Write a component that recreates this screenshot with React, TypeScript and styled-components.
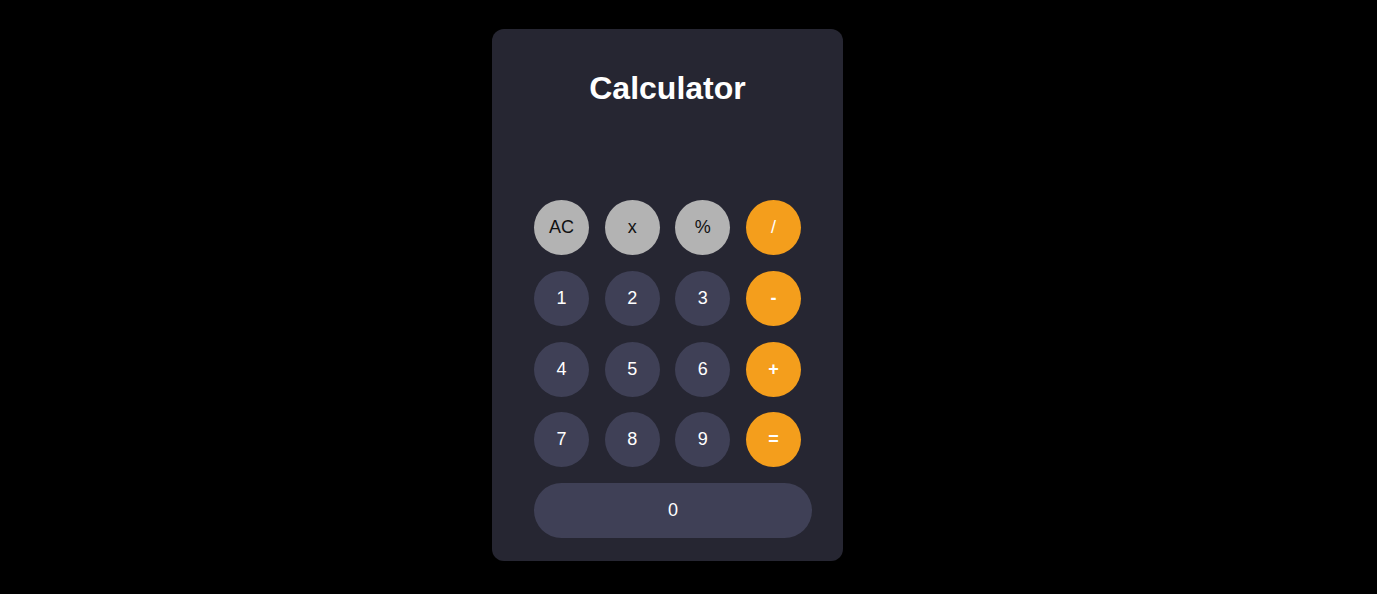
import React, { useState } from "react";
import styled, { createGlobalStyle } from "styled-components";

const Global = createGlobalStyle`
  html, body { margin: 0; padding: 0; background: #000; }
  body { font-family: "Liberation Sans", Arial, sans-serif; }
  * { box-sizing: border-box; }
`;

const Page = styled.div`
  min-height: 594px;
  display: flex;
  justify-content: center;
  align-items: flex-start;
  padding-top: 29px;
  padding-right: 42px;
`;

const Card = styled.div`
  width: 351px;
  height: 532px;
  background: #262632;
  border-radius: 12px;
  padding: 41px 31px 23px 42px;
  display: flex;
  flex-direction: column;
`;

const Title = styled.h1`
  margin: 0 -31px 0 -42px;
  text-align: center;
  color: #ffffff;
  font-size: 32px;
  font-weight: 700;
  line-height: 37px;
`;

const Display = styled.div`
  height: 93px;
  color: #fff;
  font-size: 40px;
  text-align: right;
  padding-right: 11px;
  display: flex;
  align-items: center;
  justify-content: flex-end;
`;

const Keys = styled.div`
  display: grid;
  grid-template-columns: repeat(4, 55px);
  grid-auto-rows: 55px;
  column-gap: 15.67px;
  row-gap: 15.75px;
`;

type Kind = "func" | "num" | "op";

const Key = styled.button<{ $kind: Kind; $wide?: boolean; $bold?: boolean }>`
  border: none;
  outline: none;
  padding: 0;
  border-radius: 28px;
  width: ${(p) => (p.$wide ? "278px" : "55px")};
  height: 55px;
  grid-column: ${(p) => (p.$wide ? "1 / span 4" : "auto")};
  font-family: "Liberation Sans", Arial, sans-serif;
  font-size: 18px;
  font-weight: ${(p) => (p.$bold ? 700 : 400)};
  cursor: pointer;
  background: ${(p) =>
    p.$kind === "func" ? "#b3b3b3" : p.$kind === "op" ? "#f49e1c" : "#3f4056"};
  color: ${(p) => (p.$kind === "func" ? "#111111" : "#ffffff")};
`;

const keys: { label: string; kind: Kind; wide?: boolean; bold?: boolean }[] = [
  { label: "AC", kind: "func" },
  { label: "x", kind: "func" },
  { label: "%", kind: "func" },
  { label: "/", kind: "op" },
  { label: "1", kind: "num" },
  { label: "2", kind: "num" },
  { label: "3", kind: "num" },
  { label: "-", kind: "op", bold: true },
  { label: "4", kind: "num" },
  { label: "5", kind: "num" },
  { label: "6", kind: "num" },
  { label: "+", kind: "op", bold: true },
  { label: "7", kind: "num" },
  { label: "8", kind: "num" },
  { label: "9", kind: "num" },
  { label: "=", kind: "op", bold: true },
  { label: "0", kind: "num", wide: true },
];

export default function App() {
  const [value, setValue] = useState("");

  const press = (k: string) => {
    if (k === "AC") return setValue("");
    if (k === "x") return setValue((v) => v.slice(0, -1));
    if (k === "=") {
      try {
        // eslint-disable-next-line no-new-func
        const r = Function(`return (${value.replace(/%/g, "/100")})`)();
        setValue(String(r));
      } catch {
        setValue("Error");
      }
      return;
    }
    setValue((v) => v + k);
  };

  return (
    <>
      <Global />
      <Page>
        <Card>
          <Title>Calculator</Title>
          <Display>{value}</Display>
          <Keys>
            {keys.map((k) => (
              <Key
                key={k.label}
                $kind={k.kind}
                $wide={k.wide}
                $bold={k.bold}
                onClick={() => press(k.label)}
              >
                {k.label}
              </Key>
            ))}
          </Keys>
        </Card>
      </Page>
    </>
  );
}
